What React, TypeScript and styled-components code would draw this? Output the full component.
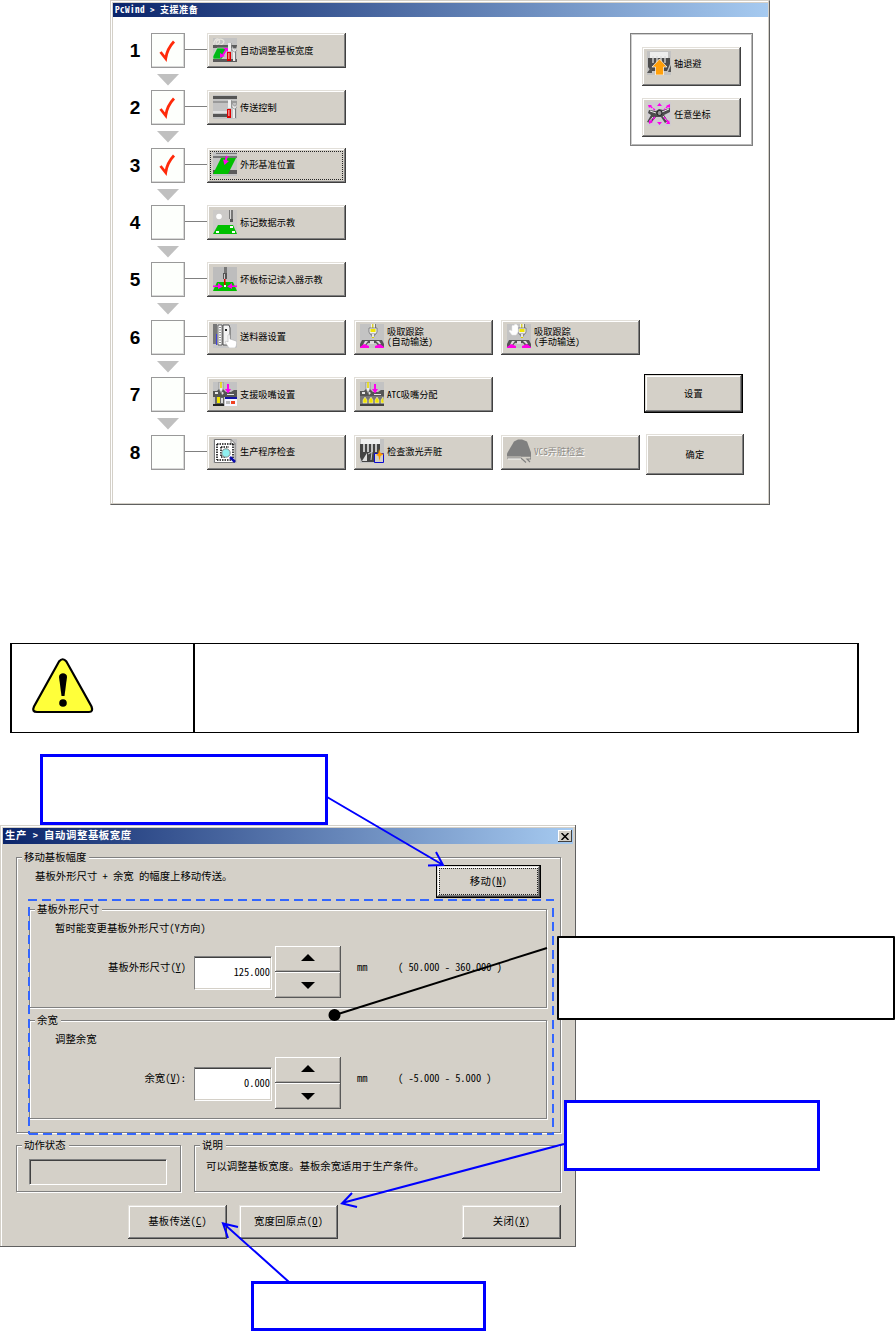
import React from "react";
import styled, { createGlobalStyle, css } from "styled-components";

const face = "#d4d0c8";
const shade = "#808080";
const dark = "#404040";

const GlobalStyle = createGlobalStyle`
  * { box-sizing: border-box; }
  body {
    margin: 0;
    background: #fff;
    color: #000;
    font-family: "Noto Sans CJK SC", "Liberation Sans", sans-serif;
    font-feature-settings: "hwid";
  }
`;

const Page = styled.main`
  position: relative;
  width: 895px;
  height: 1331px;
  overflow: hidden;
  background: #fff;
`;

const raised = css`
  background: ${face};
  box-shadow: inset -1px -1px ${dark}, inset 1px 1px #e2dfd9, inset -2px -2px ${shade}, inset 2px 2px #fff;
`;

/* ---------- support window ---------- */

const SupportWindow = styled.section`
  width: 660px;
  height: 505px;
  margin-left: 110px;
  padding: 2px 1px 0 2px;
  background: #fff;
  border: 1px solid ${face};
  border-right-color: #606060;
  border-bottom-color: #606060;
  box-shadow: inset -1px -1px ${face}, inset 1px 1px #fff, inset 2px 2px ${face};
`;

const TitleBar = styled.header<{ $height: number; $size: number; $spacing: number }>`
  display: flex;
  align-items: center;
  justify-content: space-between;
  height: ${(p) => p.$height}px;
  padding: 0 1px 0 2px;
  background: linear-gradient(90deg, #0a246a, #a6caf0);
  color: #fff;
  font-size: ${(p) => p.$size}px;
  letter-spacing: ${(p) => p.$spacing}px;
  font-weight: 700;
  line-height: ${(p) => p.$height - 2}px;
  white-space: pre;
`;

const TitleText = styled.span`
  padding-bottom: 2px;
`;

const SupportBody = styled.div`
  display: grid;
  grid-template-columns: 506px 124px;
  padding: 16px 0 0 11px;
`;

const Steps = styled.div`
  display: flex;
  flex-direction: column;
`;

const StepRow = styled.div`
  display: flex;
  height: 35px;
`;

const StepNumber = styled.div`
  flex: none;
  width: 27px;
  padding-right: 5px;
  font: 700 19px/36px "Liberation Sans", Arial, sans-serif;
  text-align: center;
`;

const CheckBox = styled.div`
  display: flex;
  align-items: center;
  justify-content: center;
  flex: none;
  width: 34px;
  height: 35px;
  border: 1px solid #999;
  box-shadow: inset -1px -1px #d8d8d8;
  background: #fdfffc;
`;

const Connector = styled.div`
  flex: none;
  width: 22px;
  height: 1px;
  margin-top: 16px;
  background: ${shade};
`;

const StepButtons = styled.div`
  display: flex;
  flex: none;
  gap: 8px;
`;

const ToolButton = styled.button<{ $off?: boolean }>`
  position: relative;
  display: flex;
  flex: none;
  align-items: center;
  gap: 3px;
  width: 139px;
  height: 35px;
  padding: 0 0 2px 6px;
  border: 0;
  ${raised}
  color: ${(p) => (p.$off ? "#8e8b86" : "#000")};
  text-shadow: ${(p) => (p.$off ? "1px 1px #fff" : "none")};
  font-family: inherit;
  font-feature-settings: inherit;
  font-size: 9.2px;
  line-height: 10px;
  text-align: left;
  white-space: pre;
`;

const PanelButton = styled(ToolButton)`
  width: 99px;
  height: 39px;
  padding: 0 0 7px 5px;
`;

const FocusRing = styled.span<{ $inset: number }>`
  position: absolute;
  inset: ${(p) => p.$inset}px;
  border: 1px dotted #222;
`;

const ArrowSlot = styled.div`
  height: 22.36px;
  padding: 6px 0 0 33px;
  line-height: 0;
`;

const Side = styled.div`
  display: flex;
  flex-direction: column;
  align-items: flex-start;
`;

const SidePanel = styled.div`
  display: flex;
  flex-direction: column;
  gap: 12px;
  width: 123px;
  height: 113px;
  padding: 13px 0 0 11px;
  border: 1px solid ${shade};
  box-shadow: inset 1px 1px #d0d0d0, inset -1px -1px #b8b8b8;
`;

const CommandButton = styled.button<{ $w: number; $h: number; $size: number; $default?: boolean }>`
  position: relative;
  flex: none;
  width: ${(p) => p.$w}px;
  height: ${(p) => p.$h}px;
  padding: 0 0 2px;
  border: ${(p) => (p.$default ? "1px solid #000" : "0")};
  ${raised}
  color: #000;
  font-family: inherit;
  font-feature-settings: inherit;
  font-size: ${(p) => p.$size}px;
  letter-spacing: 0.2px;
  line-height: 14px;
`;

const SettingsButton = styled(CommandButton)`
  margin: 228px 0 21px 14px;
`;

const ConfirmButton = styled(CommandButton)`
  margin-left: 16px;
`;

/* ---------- caution table ---------- */

const Caution = styled.section`
  display: grid;
  grid-template-columns: 183px 1fr;
  width: 849px;
  height: 90px;
  margin: 138px 0 0 10px;
  border: solid #000;
  border-width: 1px 2px 1px 2px;
`;

const CautionSign = styled.div`
  padding: 14px 0 0 19px;
  border-right: 2px solid #000;
  line-height: 0;
`;

/* ---------- width dialog ---------- */

const Dialog = styled.section`
  width: 576px;
  height: 422px;
  margin-top: 92px;
  padding: 3px;
  background: ${face};
  box-shadow: inset -1px -1px #606060, inset 1px 1px ${face}, inset 2px 2px #fff;
  font-size: 10.4px;
  line-height: 14px;
  white-space: pre;
`;

const CloseButton = styled.button`
  display: flex;
  align-items: center;
  justify-content: center;
  width: 14px;
  height: 12px;
  padding: 0;
  border: 0;
  background: ${face};
  box-shadow: inset -1px -1px ${dark}, inset 1px 1px #fff;
`;

const DialogBody = styled.div`
  padding: 13px 12px 0 13px;
`;

const Group = styled.div<{ $w: number; $h: number }>`
  flex: none;
  width: ${(p) => p.$w}px;
  height: ${(p) => p.$h}px;
  border: 1px solid ${shade};
  box-shadow: 1px 1px #fff, inset 1px 1px #fff;
`;

const InnerGroup = styled(Group)<{ $top: number }>`
  margin: ${(p) => p.$top}px 0 0 12px;
`;

const Legend = styled.div`
  width: max-content;
  height: 14px;
  margin: -8px 0 0 5px;
  padding: 0 3px 0 2px;
  background: ${face};
`;

const MoveRow = styled.div`
  display: flex;
  align-items: flex-start;
  justify-content: space-between;
  height: 34px;
  padding: 1px 19px 0 18px;
`;

const MoveText = styled.div`
  margin-top: 4px;
`;

const Hint = styled.div`
  margin: 5px 0 11px 25px;
`;

const FieldRow = styled.div`
  display: flex;
  align-items: flex-start;
`;

const FieldLabel = styled.div`
  width: 164px;
  margin-top: 14px;
  padding-right: 8px;
  text-align: right;
`;

const ValueBox = styled.div`
  width: 78px;
  height: 34px;
  margin: 10px 3px 0 0;
  padding: 8px 1px 0;
  background: #fff;
  border: 1px solid ${shade};
  border-right-color: #fff;
  border-bottom-color: #fff;
  box-shadow: inset 0 1px ${dark}, inset -1px -1px ${face};
  text-align: right;
`;

const Spinner = styled.div`
  display: flex;
  flex-direction: column;
  width: 66px;
`;

const SpinButton = styled.button<{ $lift?: number }>`
  display: flex;
  align-items: center;
  justify-content: center;
  height: 26px;
  padding: 0 0 ${(p) => p.$lift ?? 0}px;
  border: 0;
  background: ${face};
  box-shadow: inset -1px -1px #585858, inset 1px 1px #fff, inset -2px -2px #a8a5a0;
`;

const Unit = styled.div`
  width: 57px;
  margin-top: 14px;
  padding-left: 16px;
`;

const Range = styled.div`
  margin-top: 14px;
`;

const InfoRow = styled.div`
  display: flex;
  gap: 13px;
  margin-top: 12px;
`;

const StatusBox = styled.div`
  width: 138px;
  height: 26px;
  margin: 7px 0 0 12px;
  border: 1px solid ${shade};
  border-right-color: #fff;
  border-bottom-color: #fff;
  box-shadow: inset 1px 1px ${dark};
`;

const InfoText = styled.div`
  margin: 7px 0 0 11px;
`;

const ButtonRow = styled.div`
  display: flex;
  gap: 12px;
  margin: 13px 0 0 112px;
`;

const Spacer = styled.div`
  flex: 1;
`;

/* ---------- annotations laid over the page ---------- */

const Callout = styled.div<{ $x: number; $y: number; $w: number; $h: number; $black?: boolean }>`
  position: absolute;
  left: ${(p) => p.$x}px;
  top: ${(p) => p.$y}px;
  width: ${(p) => p.$w}px;
  height: ${(p) => p.$h}px;
  background: #fff;
  border: ${(p) => (p.$black ? "2px solid #000" : "3px solid #00f")};
  border-radius: ${(p) => (p.$black ? 1 : 0)}px;
`;

const Overlay = styled.svg`
  position: absolute;
  inset: 0;
  pointer-events: none;
`;

/* ---------- icons ---------- */

const Icon = styled.svg.attrs({ viewBox: "0 0 24 24", width: 24, height: 24 })`
  flex: none;
`;

const Bg = ({ c = "#c3c3c3" }: { c?: string }) => <rect width="24" height="24" fill={c} />;

const Tools = () => (
  <g>
    <path d="M15 5h3v8h-3z" fill="#f0f0f0" />
    <path d="M18 5h.6v8H18z" fill="#888" />
    <path d="M14 14h4v9h-4z" fill="#e00000" />
    <path d="M15.500 15h.8v6h-.8z" fill="#fff" />
    <path d="M20 13h2v10h-2z" fill="#f0f0f0" />
    <path d="M22 13h1v10h-1z" fill="#777" />
    <path d="M19 8v4l2 2h1l2-2V8l-1.500 3h-1.500z" fill="#e4e4e4" stroke="#777" strokeWidth=".5" />
  </g>
);

const Nozzle = ({ x = 13 }: { x?: number }) => (
  <g transform={`translate(${x} 0)`}>
    <path d="M-2 0h4v4h-4z" fill="#eee" />
    <path d="M-1 0h1.500v4H-1z" fill="#d8cf30" />
    <path d="M2 0h1v5H2z" fill="#777" />
    <path d="M-4 4h8v4l-1 2h-6l-1-2z" fill="#eee" stroke="#666" strokeWidth=".7" />
    <path d="M-2.500 5h5v3h-5z" fill="#f1e600" />
    <path d="M-3 10h6l-2 3h-2z" fill="#888" />
    <path d="M-1 10h2v4h-2z" fill="#e4e4e4" />
    <path d="M-1 13h2v1h-2z" fill="#d8d000" />
  </g>
);

const TapeFeet = () => (
  <g>
    <path d="M2 16h20l2 4v4h-4l-4-5h-8l-4 5H0v-4z" fill="#555" />
    <path d="M5 17h3l-3 4H3zM16 17h3l2 3h-2zM10 17h4v3h-4z" fill="#ddd" />
    <path d="M0 23l4-3 5 2v2H0zM24 23l-4-3-5 2v2h9z" fill="#ff00e6" />
  </g>
);

const Heads = () => (
  <g>
    <path d="M0 9h4l2-2h4l3 3h5l3-2h3v7H0z" fill="#555" />
    <path d="M2 10h3v2H2zM8 9l3 2-2 2zM14 12h7v1h-7z" fill="#e6e6e6" />
    <path d="M6 0h4v7l-2 4-2-4z" fill="#eee" stroke="#777" strokeWidth=".6" />
    <path d="M7.200 0h1.600v6H7.200z" fill="#e4d900" />
    <path d="M14 2h2v5h2l-3 4.500L12 7h2z" fill="#f0e" />
  </g>
);

const icons: Record<string, React.ReactNode> = {
  width: (
    <>
      <Bg />
      <path d="M1 8C0 3 4-1 6 2s-3 6-3 3 4-5 7-3-2 6-4 5" fill="none" stroke="#e9e6df" strokeWidth="1.200" />
      <path d="M0 7h24v3H0z" fill="#5b5b5b" />
      <path d="M4 10h11l-6 11H0v-3z" fill="#00b818" stroke="#fff" strokeWidth=".5" />
      <path d="M0 21h24v3H0z" fill="#5b5b5b" />
      <path d="M10 17l3-5" stroke="#f0e" strokeWidth="2" />
      <path d="M10 10h5v4zM7 20v-5l5 3z" fill="#f0e" />
      <Tools />
    </>
  ),
  convey: (
    <>
      <Bg />
      <path d="M0 1h24v3H0zM0 19h15v3H0z" fill="#555" />
      <path d="M0 6h24v2H0z" fill="#999" />
      <path d="M0 16h15v2H0z" fill="#e0e0e0" />
      <Tools />
    </>
  ),
  outline: (
    <>
      <Bg />
      <path d="M3 1h21v1H3zM0 4h24v2H0z" fill="#777" />
      <path d="M0 18h24v4H0z" fill="#5b5b5b" />
      <path d="M8 6h15l-8 16H0z" fill="#00c000" />
      <path d="M14 4l-1.500 5" stroke="#f0e" strokeWidth="2" />
      <path d="M10 7.500l6 1.500-4.500 4z" fill="#f0e" />
    </>
  ),
  mark: (
    <>
      <Bg c="#cccac8" />
      <circle cx="6" cy="6.500" r="2.800" fill="#fff" />
      <path d="M16 0h4v9h-4z" fill="#777" />
      <path d="M17 0h1v9h-1z" fill="#d8d8d8" />
      <path d="M17 9h3v3h-3z" fill="#555" />
      <path d="M5 15h15l4 9H0z" fill="#00c000" />
      <path d="M3 21h3v2H3zM19 21h3v2h-3zM17 16h3v2h-3z" fill="#fff" />
    </>
  ),
  bad: (
    <>
      <Bg c="#bdbdbd" />
      <path d="M11 0h3v8h-3z" fill="#777" />
      <path d="M10 6h4v6h-4z" fill="#555" />
      <path d="M11 7h1v5h-1z" fill="#ccc" />
      <path d="M4 15h16l4 9H0z" fill="#00c000" />
      <path d="M11 12h1.500v7H11z" fill="#e00000" />
      <path d="M0 18.500h5V16l5 3.500L5 22v-2H0zM24 18.500h-5V16l-5 3.500 5 2.500v-2h5z" fill="#f0e" />
      <path d="M11 18h2v2h-2z" fill="#fff" />
    </>
  ),
  feeder: (
    <>
      <Bg c="#c8c8c8" />
      <path d="M0 0h4v20H0z" fill="#777" />
      <path d="M5 1h4v20H5z" fill="#fff" stroke="#333" strokeWidth=".7" />
      <path d="M7 3v16" stroke="#222" strokeDasharray="1 1.500" />
      <path d="M3 10h1v11H3z" fill="#4040e0" />
      <path d="M10 1h6l1 3v17h-7z" fill="#f4f4f4" stroke="#333" strokeWidth=".8" />
      <path d="M12 5h2v2h-2z" fill="#222" />
      <path d="M15 11c1-1 2 0 2 1v3l6 2c1 0 1 5-1 7h-6l-4-6c0-1 2-1 3 0z" fill="#fff" stroke="#aaa" strokeWidth=".5" />
    </>
  ),
  trackAuto: (
    <>
      <Bg />
      <TapeFeet />
      <Nozzle />
    </>
  ),
  trackManual: (
    <>
      <Bg />
      <TapeFeet />
      <Nozzle x={15} />
      <path d="M2 7l1-1 2 1V2l1-1 1 1V1l2-1 1 1 1 1v6l-2 3H5z" fill="#fff" stroke="#e4e4e4" strokeWidth=".5" />
    </>
  ),
  nozzle: (
    <>
      <Bg />
      <Heads />
      <path d="M2 15h9v9H2z" fill="#666" />
      <path d="M4 15h3v6H4z" fill="#f0e500" />
      <path d="M8 16h2v5H8z" fill="#ddd" />
      <path d="M12 15h12v9H12z" fill="#f6f6ff" />
      <path d="M12 15h12v2H12z" fill="#1212a8" />
      <path d="M18 19h4v3h-4z" fill="#f04020" />
      <path d="M13 19h4v3h-4z" fill="#bbb" />
      <path d="M0 22h11v2H0z" fill="#222" />
    </>
  ),
  atc: (
    <>
      <Bg />
      <Heads />
      <path d="M0 14h24v10H0z" fill="#777" />
      <path d="M5 15l-2 3v3h4v-3zM11 15l-2 3v3h4v-3zM17 15l-2 3v3h4v-3zM23 15l-2 3v3h3z" fill="#efe400" stroke="#eee" strokeWidth=".5" />
      <path d="M0 22h24v2H0z" fill="#444" />
    </>
  ),
  program: (
    <>
      <Bg />
      <path d="M1.500.5H18l4 4v19H1.500z" fill="#fff" stroke="#777" />
      <path d="M18 0v5h4" fill="none" stroke="#777" />
      <path d="M4 5h16M4 21h16M4 5v16M20 5v16M8 8v10M8 8h8M8 18h5" stroke="#111" strokeWidth="1.600" strokeDasharray="1.500 1" fill="none" />
      <circle cx="13" cy="14" r="4.200" fill="#8ff0f0" stroke="#888" />
      <path d="M17 18l5 5" stroke="#0b0bb0" strokeWidth="2.500" />
    </>
  ),
  laser: (
    <>
      <Bg />
      <path d="M1 0h19v5H1z" fill="#f0f0f0" />
      <path d="M0 5h20v9l-2 9H2L0 18z" fill="#444" />
      <path d="M4 5v8M8 5v8M12 5v8M16 5v8" stroke="#eee" strokeWidth="1.500" />
      <path d="M2 22l5-8v8z" fill="#ddd" />
      <path d="M8 15l4-2-1 8" stroke="#ccc" fill="none" />
      <path d="M14.500 14.500h9v9h-9z" fill="#d4d0c8" stroke="#0b0bd0" />
      <path d="M19 10l1.500 4 3.500 1-3.500 2-1 5-1-5-2.500-1 2.500-2z" fill="#ff9b00" />
    </>
  ),
  vcs: (
    <>
      <path d="M7 2.500l4-2h4l5 2 4 11v4H0v-3z" fill="#808080" />
      <path d="M0 19h14l5 4.500M14 17h10v3h-4l3 3" fill="none" stroke="#808080" strokeWidth="1.200" />
      <path d="M1 20h13" stroke="#fff" strokeWidth=".8" />
    </>
  ),
  retract: (
    <>
      <Bg />
      <path d="M3 1h18v6H3z" fill="#eee" />
      <path d="M1 7h22v6l-3 7H4l-3-4z" fill="#4c4c4c" />
      <path d="M6 5v7M10 5v7M14 5v7M18 5v7" stroke="#ddd" strokeWidth="1.300" />
      <path d="M0 22l5-7v7zM21 21l3-7v7z" fill="#555" />
      <path d="M12.500 8l7.500 8h-3.500v8h-8v-8H5z" fill="#ff9f0a" stroke="#fff" strokeWidth=".7" />
    </>
  ),
  coord: (
    <>
      <Bg c="#cfccd0" />
      <path d="M2 8l7 1 3-2 4 1 7-2v4l-6 3 4 6-3 2-4-6h-5l-5 6-4-1 4-7-3-2z" fill="#4d4d4d" />
      <path d="M3 9l6 2M15 10l7-3M6 15l-4 5M16 14l4 5" stroke="#e8e8e8" />
      <circle cx="12.500" cy="11" r="2.500" fill="#999" stroke="#222" />
      <path d="M1 3h4L2 6zM23 2v4l-4-2zM2 22v-4l4 2zM23 22h-4l3-4zM10 4l2.500-3L15 4zM10 20h5l-2.500 3z" fill="#f0e" />
      <path d="M3 4l5 4M21 4l-4 4M3 20l5-5M21 20l-4-5" stroke="#f0e" strokeWidth="1.400" strokeDasharray="3 1" />
    </>
  ),
};

const CheckMark = () => (
  <svg width="20" height="26" viewBox="0 0 20 26">
    <path d="M2.500 14l5.200 6.500c1-7 4-12.500 8.300-17" fill="none" stroke="#ff2a0a" strokeWidth="2.800" />
  </svg>
);

type Tool = { icon: string; label: string; off?: boolean; focus?: boolean };

const steps: { done?: boolean; tools: Tool[] }[] = [
  { done: true, tools: [{ icon: "width", label: "自动调整基板宽度" }] },
  { done: true, tools: [{ icon: "convey", label: "传送控制" }] },
  { done: true, tools: [{ icon: "outline", label: "外形基准位置", focus: true }] },
  { tools: [{ icon: "mark", label: "标记数据示教" }] },
  { tools: [{ icon: "bad", label: "坏板标记读入器示教" }] },
  {
    tools: [
      { icon: "feeder", label: "送料器设置" },
      { icon: "trackAuto", label: "吸取跟踪\n(自动输送)" },
      { icon: "trackManual", label: "吸取跟踪\n(手动输送)" },
    ],
  },
  {
    tools: [
      { icon: "nozzle", label: "支援吸嘴设置" },
      { icon: "atc", label: "ATC吸嘴分配" },
    ],
  },
  {
    tools: [
      { icon: "program", label: "生产程序检查" },
      { icon: "laser", label: "检查激光弄脏" },
      { icon: "vcs", label: "VCS弄脏检查", off: true },
    ],
  },
];

const Triangle = ({ down }: { down?: boolean }) => (
  <svg width="14" height="7" viewBox="0 0 14 7">
    <path d={down ? "M0 0h14L7 7z" : "M0 7h14L7 0z"} />
  </svg>
);

const Field = ({ label, hotkey, tail, value, range }: { label: string; hotkey: string; tail: string; value: string; range: string }) => (
  <FieldRow>
    <FieldLabel>
      {label}(<u>{hotkey}</u>{tail}
    </FieldLabel>
    <ValueBox>{value}</ValueBox>
    <Spinner>
      <SpinButton aria-label="+" $lift={4}><Triangle /></SpinButton>
      <SpinButton aria-label="-"><Triangle down /></SpinButton>
    </Spinner>
    <Unit>mm</Unit>
    <Range>{range}</Range>
  </FieldRow>
);

export default function App() {
  return (
    <Page lang="zh-CN">
      <GlobalStyle />
      <SupportWindow>
        <TitleBar $height={14} $size={9.2} $spacing={0.4}>
          <TitleText>{"PcWind > 支援准备"}</TitleText>
        </TitleBar>
        <SupportBody>
          <Steps>
            {steps.map((step, i) => (
              <React.Fragment key={i}>
                <StepRow>
                  <StepNumber>{i + 1}</StepNumber>
                  <CheckBox>{step.done && <CheckMark />}</CheckBox>
                  <Connector />
                  <StepButtons>
                    {step.tools.map((t) => (
                      <ToolButton key={t.icon} $off={t.off}>
                        <Icon>{icons[t.icon]}</Icon>
                        <span>{t.label}</span>
                        {t.focus && <FocusRing $inset={3} />}
                      </ToolButton>
                    ))}
                  </StepButtons>
                </StepRow>
                {i < steps.length - 1 && (
                  <ArrowSlot>
                    <svg width="22" height="12" viewBox="0 0 22 12">
                      <path d="M0 0h22L11 11.500z" fill="#c0c0c0" />
                    </svg>
                  </ArrowSlot>
                )}
              </React.Fragment>
            ))}
          </Steps>
          <Side>
            <SidePanel>
              <PanelButton>
                <Icon>{icons.retract}</Icon>
                <span>轴退避</span>
              </PanelButton>
              <PanelButton>
                <Icon>{icons.coord}</Icon>
                <span>任意坐标</span>
              </PanelButton>
            </SidePanel>
            <SettingsButton $w={99} $h={39} $size={9.2} $default>设置</SettingsButton>
            <ConfirmButton $w={98} $h={41} $size={9.2}>确定</ConfirmButton>
          </Side>
        </SupportBody>
      </SupportWindow>

      <Caution>
        <CautionSign>
          <svg width="64" height="58" viewBox="0 0 64 58">
            <path d="M28 3.500Q31.700-1 35.400 3.500L60.500 48.500Q62.500 54 58 54H6Q.5 54 3 48.500z" fill="#ffff3a" stroke="#000" strokeWidth="2.200" />
            <path d="M28 19c0-5 8-5 8 0l-2.500 19h-3z" />
            <circle cx="32" cy="45" r="3.800" />
          </svg>
        </CautionSign>
      </Caution>

      <Dialog>
        <TitleBar $height={16} $size={10.4} $spacing={0.55}>
          <TitleText>{"生产 > 自动调整基板宽度"}</TitleText>
          <CloseButton aria-label="关闭">
            <svg width="8" height="7" viewBox="0 0 8 7">
              <path d="M.5 0l7 7M7.500 0l-7 7" stroke="#000" strokeWidth="1.500" />
            </svg>
          </CloseButton>
        </TitleBar>
        <DialogBody>
          <Group $w={545} $h={276}>
            <Legend>移动基板幅度</Legend>
            <MoveRow>
              <MoveText>基板外形尺寸 + 余宽 的幅度上移动传送。</MoveText>
              <CommandButton $w={105} $h={33} $size={10.4} $default>
                移动(<u>N</u>)
                <FocusRing $inset={2} />
              </CommandButton>
            </MoveRow>
            <InnerGroup $w={518} $h={99} $top={11}>
              <Legend>基板外形尺寸</Legend>
              <Hint>暂时能变更基板外形尺寸(Y方向)</Hint>
              <Field label="基板外形尺寸" hotkey="Y" tail=")" value="125.000" range="( 50.000 - 360.000 )" />
            </InnerGroup>
            <InnerGroup $w={518} $h={99} $top={12}>
              <Legend>余宽</Legend>
              <Hint>调整余宽</Hint>
              <Field label="余宽" hotkey="V" tail="):" value="0.000" range="( -5.000 - 5.000 )" />
            </InnerGroup>
          </Group>
          <InfoRow>
            <Group $w={165} $h={47}>
              <Legend>动作状态</Legend>
              <StatusBox />
            </Group>
            <Group $w={367} $h={47}>
              <Legend>说明</Legend>
              <InfoText>可以调整基板宽度。基板余宽适用于生产条件。</InfoText>
            </Group>
          </InfoRow>
          <ButtonRow>
            <CommandButton $w={99} $h={34} $size={10.4}>基板传送(<u>C</u>)</CommandButton>
            <CommandButton $w={99} $h={34} $size={10.4}>宽度回原点(<u>O</u>)</CommandButton>
            <Spacer />
            <CommandButton $w={99} $h={34} $size={10.4}>关闭(<u>X</u>)</CommandButton>
          </ButtonRow>
        </DialogBody>
      </Dialog>

      <Callout $x={40} $y={754} $w={288} $h={71} />
      <Callout $x={557} $y={936} $w={338} $h={84} $black />
      <Callout $x={564} $y={1100} $w={256} $h={71} />
      <Callout $x={251} $y={1281} $w={235} $h={50} />
      <Overlay width="895" height="1331" viewBox="0 0 895 1331" fill="none">
        <g stroke="#3366ff" strokeWidth="2" strokeDasharray="9 5">
          <path d="M28 900H554" />
          <path d="M29 907V1134" />
          <path d="M553 908V1134" />
          <path d="M29 1134H554" />
        </g>
        <g stroke="#00f" strokeWidth="2">
          <path d="M327 797L443 865M428 865.500L443 865L436 852" />
          <path d="M564 1144L342 1203M352 1193L342 1203.500L357 1207" />
          <path d="M289 1282L223 1223M238 1227L223 1223.500L228 1238" />
        </g>
        <path d="M335 1015L547 948" stroke="#000" strokeWidth="2" />
        <circle cx="334.500" cy="1015" r="6" fill="#000" />
      </Overlay>
    </Page>
  );
}
